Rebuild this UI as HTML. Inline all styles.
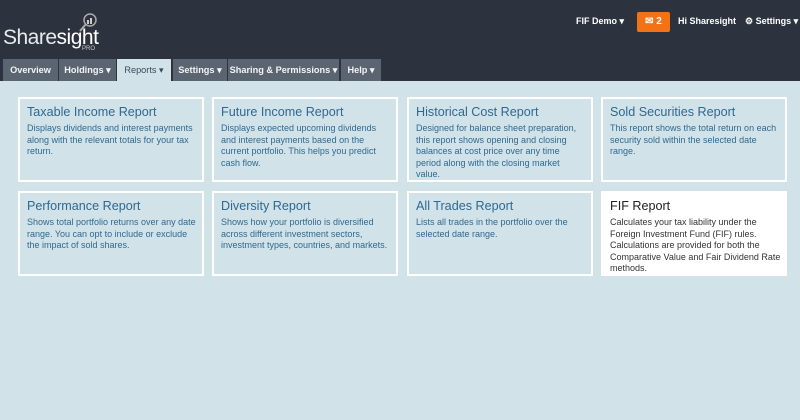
<!DOCTYPE html>
<html><head><style>
*{margin:0;padding:0;box-sizing:border-box}
body{width:800px;height:420px;background:#d1e3e9;font-family:"Liberation Sans",sans-serif;position:relative;overflow:hidden}
.hdr{position:absolute;left:0;top:0;width:800px;height:81px;background:#2d333e}
.logo{position:absolute;left:3px;top:26px;color:#e8eaec;font-size:21px;letter-spacing:-0.5px}
.logo b{font-weight:normal;color:#fff}
.pro{position:absolute;left:82px;top:46px;font-size:6px;color:#ccc}
.tab{position:absolute;top:59px;height:22px;background:#5b6571;color:#f2f4f5;font-size:9.2px;font-weight:bold;line-height:22px;text-align:center;white-space:nowrap}
.tab.act{background:#d1e3e9;color:#3a4a5a;font-weight:normal}
.tr{position:absolute;top:16px;color:#fff;font-size:9px;font-weight:bold;white-space:nowrap}
.card{position:absolute;width:186px;height:85px;border:2px solid #fff;padding:6px 3px 6px 7px;color:#2f6890;overflow:hidden}
.card h3{font-weight:normal;font-size:12.6px;margin-bottom:4px;color:#2f6890}
.card p{font-size:9px;line-height:11.5px;white-space:nowrap}
.card.w{background:#fff;color:#333}
.card.w h3{color:#222}
</style></head><body>
<div class="hdr">
<div class="logo">Share<b>sight</b></div>
<div class="pro">PRO</div>
<svg style="position:absolute;left:78px;top:12px" width="20" height="22"><circle cx="12" cy="8" r="6" fill="none" stroke="#aaa" stroke-width="1.5"/><line x1="8" y1="12" x2="2" y2="19" stroke="#aaa" stroke-width="2"/><rect x="9" y="8" width="2" height="4" fill="#ccc"/><rect x="12" y="6" width="2" height="6" fill="#ccc"/></svg>
<div class="tr" style="left:576px">FIF Demo ▾</div>
<div style="position:absolute;left:637px;top:12px;width:33px;height:20px;background:#f47216;border-radius:2px;color:#fff;font-size:10px;font-weight:bold;line-height:20px;text-align:center">✉ 2</div>
<div class="tr" style="left:678px">Hi Sharesight</div>
<div class="tr" style="left:745px">⚙ Settings ▾</div>
<div class="tab" style="left:3px;width:55px">Overview</div>
<div class="tab" style="left:59px;width:57px">Holdings ▾</div>
<div class="tab act" style="left:117px;width:54px">Reports ▾</div>
<div class="tab" style="left:173px;width:54px">Settings ▾</div>
<div class="tab" style="left:228px;width:111px">Sharing &amp; Permissions ▾</div>
<div class="tab" style="left:341px;width:40px">Help ▾</div>
</div>
<div class="card" style="left:18px;top:97px"><h3>Taxable Income Report</h3><p>Displays dividends and interest payments<br>along with the relevant totals for your tax<br>return.</p></div>
<div class="card" style="left:212px;top:97px"><h3>Future Income Report</h3><p>Displays expected upcoming dividends<br>and interest payments based on the<br>current portfolio. This helps you predict<br>cash flow.</p></div>
<div class="card" style="left:407px;top:97px"><h3>Historical Cost Report</h3><p>Designed for balance sheet preparation,<br>this report shows opening and closing<br>balances at cost price over any time<br>period along with the closing market<br>value.</p></div>
<div class="card" style="left:601px;top:97px"><h3>Sold Securities Report</h3><p>This report shows the total return on each<br>security sold within the selected date<br>range.</p></div>
<div class="card" style="left:18px;top:191px"><h3>Performance Report</h3><p>Shows total portfolio returns over any date<br>range. You can opt to include or exclude<br>the impact of sold shares.</p></div>
<div class="card" style="left:212px;top:191px"><h3>Diversity Report</h3><p>Shows how your portfolio is diversified<br>across different investment sectors,<br>investment types, countries, and markets.</p></div>
<div class="card" style="left:407px;top:191px"><h3>All Trades Report</h3><p>Lists all trades in the portfolio over the<br>selected date range.</p></div>
<div class="card w" style="left:601px;top:191px"><h3>FIF Report</h3><p>Calculates your tax liability under the<br>Foreign Investment Fund (FIF) rules.<br>Calculations are provided for both the<br>Comparative Value and Fair Dividend Rate<br>methods.</p></div>
</body></html>
